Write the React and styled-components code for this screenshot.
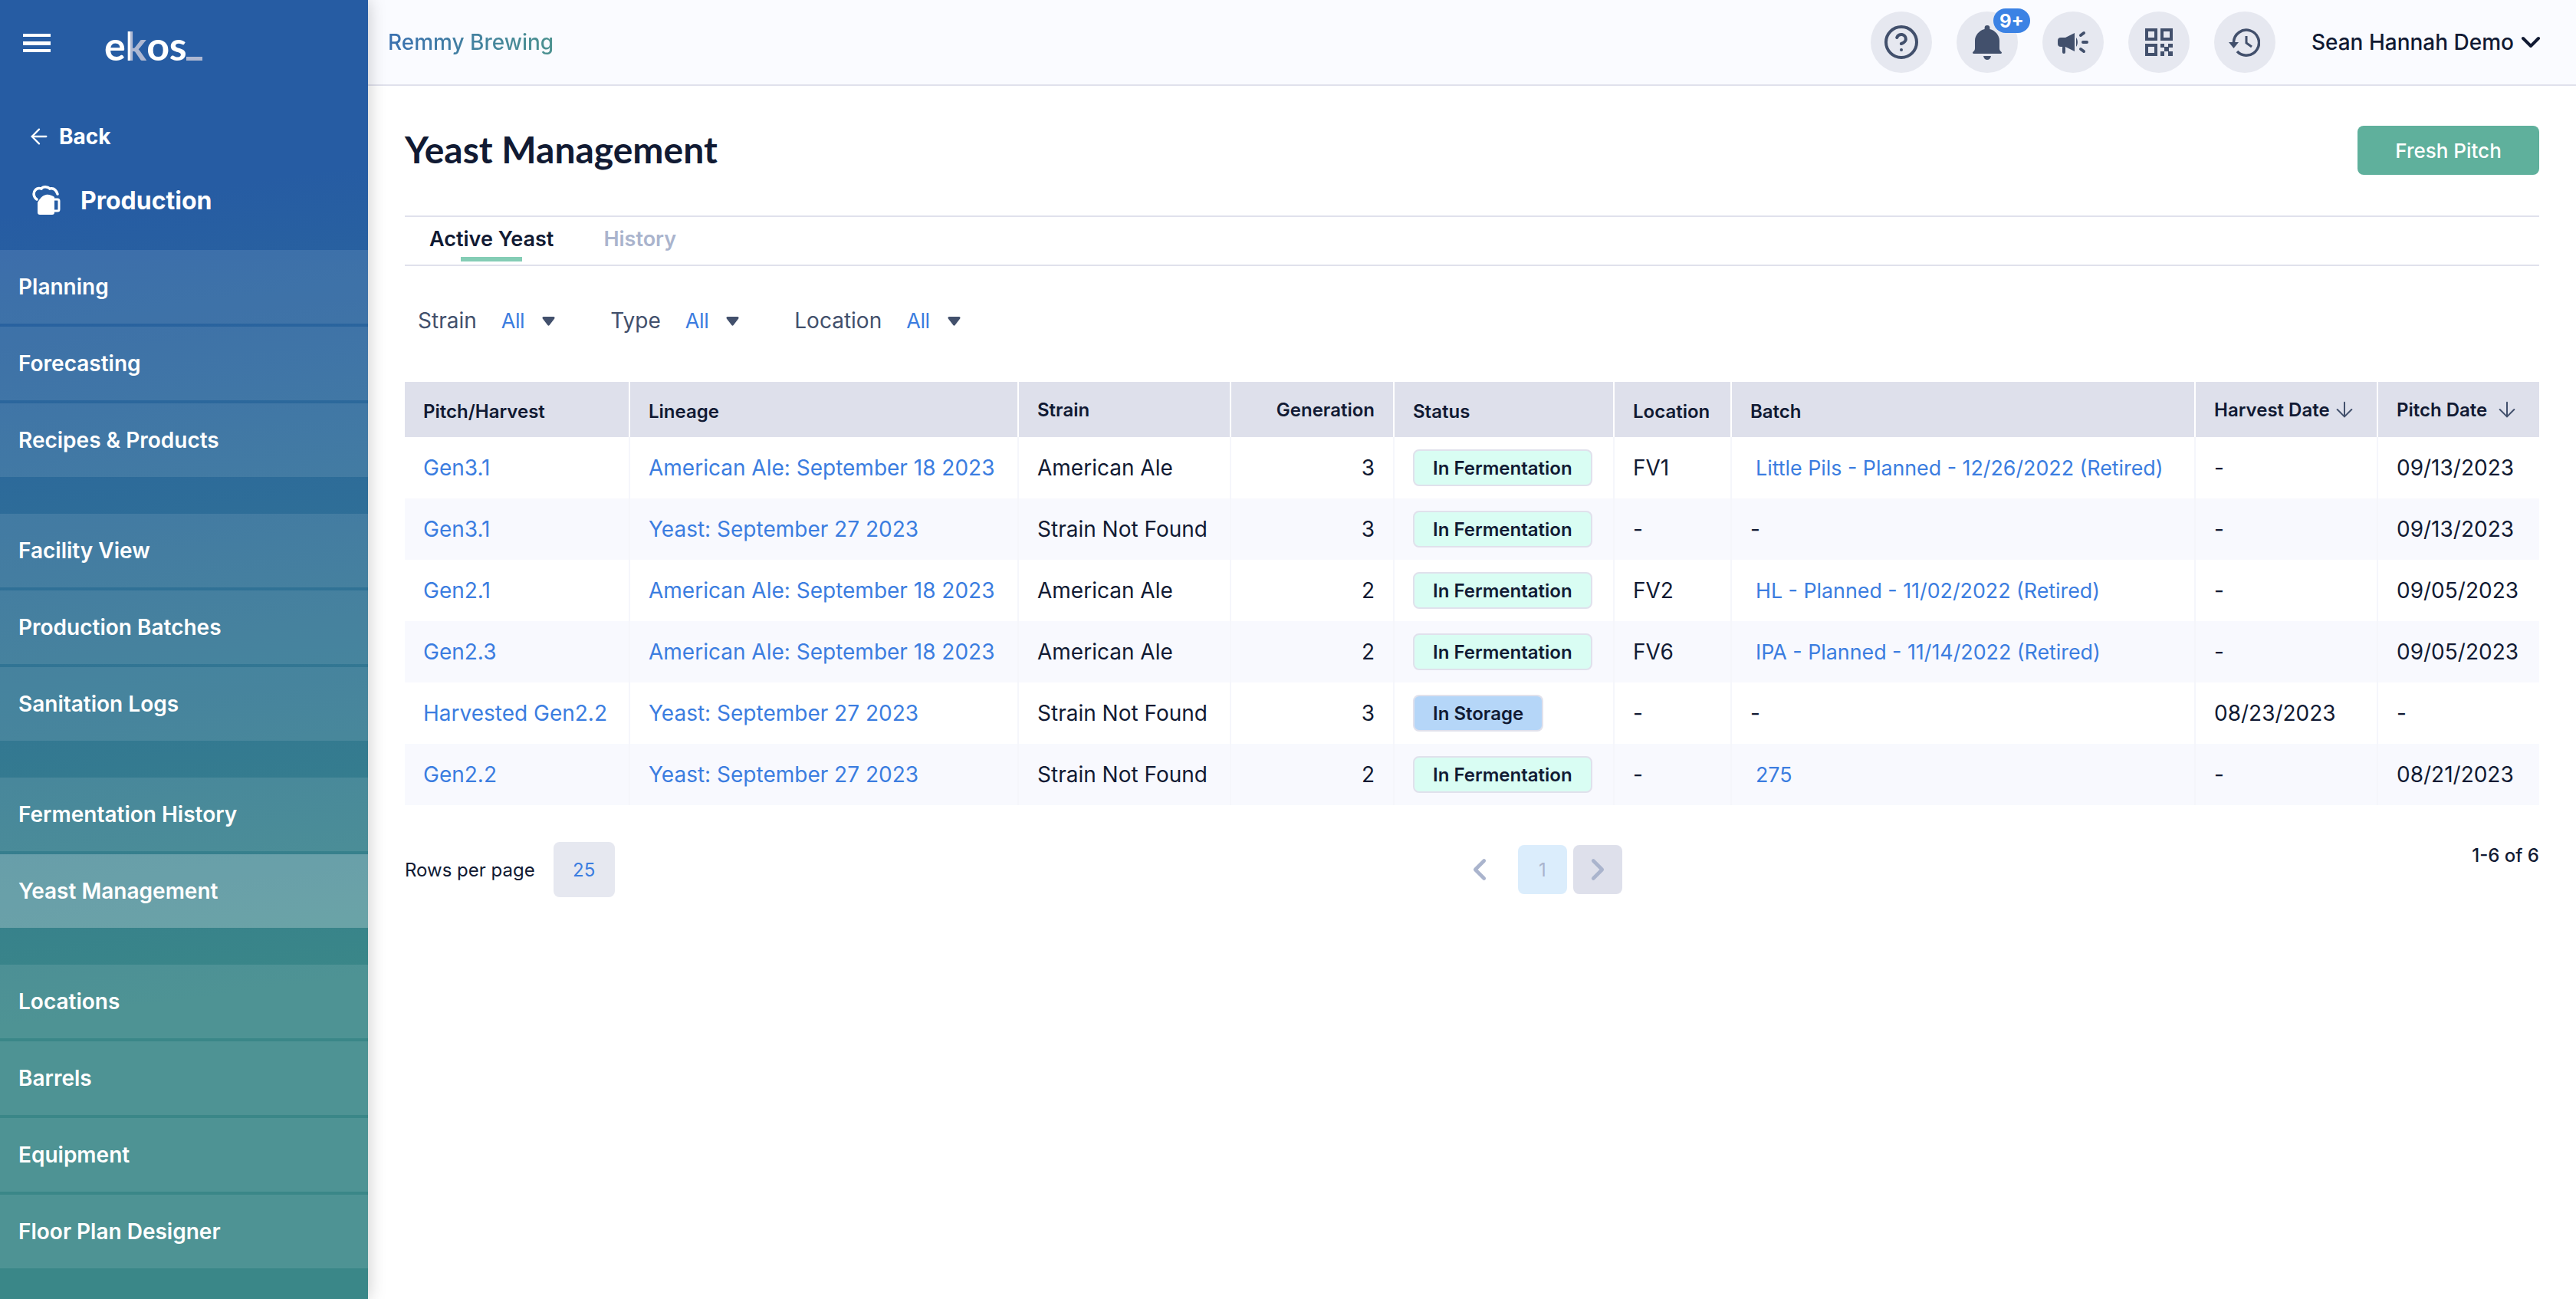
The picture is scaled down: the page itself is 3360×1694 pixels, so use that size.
import React from 'react';
import styled, { createGlobalStyle } from 'styled-components';
import { ArrowDown, ArrowLeft, ChevronDown, ChevronLeft, ChevronRight, CircleHelp } from 'lucide-react';

const Global = createGlobalStyle`
  html, body { margin: 0; padding: 0; height: 100%; overflow: hidden; background: #fff; }
  body { font-family: Inter, "Liberation Sans", sans-serif; color: #111a33; }
  * { box-sizing: border-box; }
`;

const Page = styled.div`display: flex; height: 1694px; width: 3360px;`;

const Sidebar = styled.aside`
  width: 480px; flex: none; position: relative; z-index: 2;
  background: linear-gradient(172deg, #265ca3 16%, #3a8788 76%);
  box-shadow: 0 0 22px rgba(0, 0, 0, 0.22);
  color: #fff;
`;
const Brand = styled.div`display: flex; align-items: flex-start; height: 132px; padding: 44px 0 0 30px;`;
const Burger = styled.div`
  width: 36px; height: 24px; flex: none;
  border-top: 4px solid #fff; border-bottom: 4px solid #fff;
  display: flex; align-items: center;
  &::before { content: ''; display: block; width: 100%; height: 5px; background: #fff; }
`;
const Logo = styled.div`
  margin: -16px 0 0 70px; font-family: Lato, sans-serif; font-weight: 700; font-size: 52px; line-height: 62px;
  letter-spacing: -0.2px; display: flex; align-items: baseline;
`;
const LogoK = styled.span`
  background: linear-gradient(90deg, #fff 24%, #aeb8d2 24%);
  -webkit-background-clip: text; background-clip: text; color: transparent;
`;
const LogoBar = styled.span`width: 21px; height: 5px; background: #aeb8d2; margin: 0 0 -8px -1px;`;
const BackLink = styled.div`
  display: flex; align-items: center; gap: 10px; height: 32px; padding-left: 35px; margin-top: 30px;
  font-size: 28px; font-weight: 700;
`;
const Module = styled.div`
  display: flex; align-items: center; gap: 26px; height: 40px; padding-left: 42px; margin-top: 47px;
  font-size: 32px; font-weight: 700;
`;
const Nav = styled.nav`margin-top: 45px;`;
const NavGroup = styled.div`display: flex; flex-direction: column; gap: 4px; margin-bottom: 48px;`;
const NavItem = styled.div`
  height: 96px; display: flex; align-items: center; padding-left: 24px;
  font-size: 28px; font-weight: 600;
  background: ${p => (p.$active ? 'rgba(255,255,255,0.25)' : 'rgba(255,255,255,0.1)')};
`;

const Main = styled.main`flex: 1; min-width: 0; display: flex; flex-direction: column;`;
const TopBar = styled.header`
  height: 112px; flex: none; background: #fafbff; border-bottom: 2px solid #e0e1ec;
  display: flex; align-items: center; padding: 0 39px 0 26px;
`;
const Company = styled.div`
  font-size: 28px; font-weight: 500;
  background: linear-gradient(90deg, #3a70b0, #4c9290);
  -webkit-background-clip: text; background-clip: text; color: transparent;
`;
const TopActions = styled.div`margin-left: auto; display: flex; align-items: center; gap: 32px;`;
const RoundButton = styled.div`
  width: 80px; height: 80px; border-radius: 50%; background: #e6e8f0; color: #42506c;
  display: flex; align-items: center; justify-content: center; position: relative;
`;
const CountBadge = styled.span`
  position: absolute; top: -4px; right: -16px; width: 48px; height: 32px; border-radius: 16px;
  background: #3b82e4; color: #fff; font-size: 24px; font-weight: 700;
  display: flex; align-items: center; justify-content: center;
`;
const UserMenu = styled.div`
  display: flex; align-items: center; gap: 2px; margin-left: 15px; font-size: 28px; font-weight: 500; color: #111a33;
`;

const Content = styled.div`padding: 52px 48px 0;`;
const TitleRow = styled.div`display: flex; align-items: center; justify-content: space-between; height: 64px;`;
const Title = styled.h1`
  margin: 0 0 3px; font-family: Lato, sans-serif; font-weight: 700; font-size: 48px; color: #111a33;
`;
const FreshButton = styled.button`
  width: 237px; height: 64px; border: 0; border-radius: 8px; background: #5fb09c; color: #fff;
  font: 500 26px Inter, sans-serif; padding: 0;
`;
const Tabs = styled.div`
  margin-top: 53px; height: 66px; border-top: 2px solid #e0e1ec; border-bottom: 2px solid #e0e1ec;
  display: flex; gap: 65px; padding: 0 0 6px 32px; align-items: center;
`;
const Tab = styled.div`
  font-size: 27px; font-weight: 600; color: ${p => (p.$active ? '#111a33' : '#aab4cd')}; position: relative;
  ${p => p.$active && `
    &::after { content: ''; position: absolute; left: 41px; width: 80px; height: 6px; bottom: -13px; background: #84cdb5; }
  `}
`;
const Filters = styled.div`display: flex; align-items: center; height: 142px; margin-bottom: 9px; padding-left: 17px; gap: 72px;`;
const Filter = styled.div`display: flex; align-items: center; font-size: 28px;`;
const FilterLabel = styled.span`color: #42506c; margin-right: 32px;`;
const FilterValue = styled.span`color: #3b7de0; margin-right: 23px; font-size: 27px; letter-spacing: -0.4px;`;

const columns = '292px 507px 277px 213px 287px 153px 605px 238px 1fr';
const TableHead = styled.div`
  display: grid; grid-template-columns: ${columns}; height: 72px; background: #dee0eb;
`;
const HeadCell = styled.div`
  display: flex; align-items: center; gap: ${p => p.$gap || 0}px; justify-content: ${p => (p.$right ? 'flex-end' : 'flex-start')};
  padding: ${p => (p.$raised ? 0 : 4)}px 24px 0;
  border-left: ${p => (p.$first ? 0 : '2px solid #fff')};
  font-size: 24px; font-weight: 600; color: #111a33;
`;
const TableRow = styled.div`
  display: grid; grid-template-columns: ${columns}; height: 80px;
  background: ${p => (p.$alt ? '#f8f9fe' : '#fff')};
`;
const Cell = styled.div`
  display: flex; align-items: center; justify-content: ${p => (p.$right ? 'flex-end' : 'flex-start')};
  padding: 0 24px; font-size: 28px; color: #111a33; white-space: nowrap;
  border-left: ${p => (p.$first ? 0 : '2px solid #f5f6fb')};
`;
const TableLink = styled.span`
  color: #3b7de0;
  ${p => p.$inset && 'padding-left: 7px; font-size: 26.8px;'}
`;
const StatusBadge = styled.span`
  height: 48px; padding: 0 24px; border-radius: 8px; border: 2px solid #e0e1ec;
  background: ${p => (p.$storage ? '#b5d6f8' : '#d9fdf3')};
  font-size: 24px; font-weight: 600; display: flex; align-items: center; color: #111a33;
`;
const Footer = styled.div`display: grid; grid-template-columns: 1379px auto 1fr; margin-top: 48px; align-items: start;`;
const RowsPer = styled.div`display: flex; align-items: center; gap: 24px; font-size: 24px; height: 72px;`;
const RowsValue = styled.div`
  width: 80px; height: 72px; border-radius: 8px; background: #e6e8f0; color: #3b7de0;
  display: flex; align-items: center; justify-content: center;
`;
const Pager = styled.div`display: flex; align-items: center; gap: 8px; margin-top: 4px;`;
const PrevBtn = styled.div`width: 65px; display: flex; color: #aab4cd;`;
const PageBtn = styled.div`
  width: 64px; height: 64px; border-radius: 8px; display: flex; align-items: center; justify-content: center;
  background: ${p => (p.$current ? '#dbedfc' : '#dee0eb')}; color: #aab4cd; font-size: 24px;
`;
const Count = styled.div`text-align: right; font-size: 24px; font-weight: 500; margin-top: 3px;`;

const Beer = () => (
  <svg width="37" height="38" viewBox="0 0 37 38" fill="none">
    <path d="M7 22C10 17 13 13 18 12C22 11 26 13 29 15V35a3 3 0 0 1-3 3H10a3 3 0 0 1-3-3Z" fill="#fff" />
    <path d="M29 18h4a2 2 0 0 1 2 2v11a2 2 0 0 1-2 2h-4" stroke="#fff" strokeWidth="3" />
    <path d="M6 18C1.500 15 1 9 4 6C6 3.500 9 3 12 4C14 1 20 1 23 4C27 3 31 5 33 11" stroke="#fff" strokeWidth="3.500" strokeLinecap="round" />
  </svg>
);
const Bell = () => (
  <svg width="38" height="45" viewBox="0 0 38 45" fill="currentColor">
    <path d="M19 0a3.400 3.400 0 0 1 3.400 3.400v1.600C29.500 6.800 35 13 35 20v10c0 2 1 3.500 2.500 4.800.9.800.5 2.200-.8 2.200H1.300C0 37-.4 35.600.5 34.800 2 33.500 3 32 3 30V20C3 13 8.500 6.800 15.600 5V3.400A3.400 3.400 0 0 1 19 0Z" />
    <path d="M14 40h10c-.5 3-2.500 5-5 5s-4.500-2-5-5Z" />
  </svg>
);
const Megaphone = () => (
  <svg width="40" height="30" viewBox="0 0 40 30" fill="currentColor">
    <path d="M4 9h6l12-6v24l-12-6H4a4 4 0 0 1-4-4v-4a4 4 0 0 1 4-4Z" />
    <rect x="6" y="20" width="4" height="10" rx="2" />
    <path d="M24 9c2.500 3 2.500 9 0 12Z" />
    <path d="M30 6l4-3M33 15h5M30 24l4 3" stroke="currentColor" strokeWidth="4" strokeLinecap="round" fill="none" />
  </svg>
);
const Qr = () => (
  <svg width="36" height="36" viewBox="0 0 36 36" fill="none">
    <g stroke="currentColor" strokeWidth="4">
      <rect x="2" y="2" width="12" height="12" />
      <rect x="22" y="2" width="12" height="12" />
      <rect x="2" y="22" width="12" height="12" />
    </g>
    <g fill="currentColor">
      <rect x="20" y="20" width="5" height="5" /><rect x="30" y="20" width="6" height="5" />
      <rect x="25" y="24" width="6" height="6" />
      <rect x="20" y="30" width="5" height="6" /><rect x="30" y="30" width="6" height="6" />
    </g>
  </svg>
);
const HistoryIcon = () => (
  <svg width="41" height="37" viewBox="0 0 41 37" fill="none">
    <path d="M6.500 18A16.500 16.500 0 1 1 11 30" stroke="currentColor" strokeWidth="3.500" />
    <path d="M0 18h13l-6.500 8Z" fill="currentColor" />
    <path d="M23 10v9l7 5" stroke="currentColor" strokeWidth="3" />
  </svg>
);
const Caret = () => (
  <svg width="17" height="13" viewBox="0 0 17 13" fill="#42506c">
    <path d="M2 1h13a1.500 1.500 0 0 1 1.200 2.400L9.700 12a1.500 1.500 0 0 1-2.400 0L.8 3.400A1.500 1.500 0 0 1 2 1Z" />
  </svg>
);

const nav = [
  ['Planning', 'Forecasting', 'Recipes & Products'],
  ['Facility View', 'Production Batches', 'Sanitation Logs'],
  ['Fermentation History', 'Yeast Management'],
  ['Locations', 'Barrels', 'Equipment', 'Floor Plan Designer'],
];
const FERM = 'In Fermentation';
const rows = [
  ['Gen3.1', 'American Ale: September 18 2023', 'American Ale', 3, FERM, 'FV1', 'Little Pils - Planned - 12/26/2022 (Retired)', '-', '09/13/2023'],
  ['Gen3.1', 'Yeast: September 27 2023', 'Strain Not Found', 3, FERM, '-', '-', '-', '09/13/2023'],
  ['Gen2.1', 'American Ale: September 18 2023', 'American Ale', 2, FERM, 'FV2', 'HL - Planned - 11/02/2022 (Retired)', '-', '09/05/2023'],
  ['Gen2.3', 'American Ale: September 18 2023', 'American Ale', 2, FERM, 'FV6', 'IPA - Planned - 11/14/2022 (Retired)', '-', '09/05/2023'],
  ['Harvested Gen2.2', 'Yeast: September 27 2023', 'Strain Not Found', 3, 'In Storage', '-', '-', '08/23/2023', '-'],
  ['Gen2.2', 'Yeast: September 27 2023', 'Strain Not Found', 2, FERM, '-', '275', '-', '08/21/2023'],
];
const filters = ['Strain', 'Type', 'Location'];

export default function App() {
  return (
    <Page>
      <Global />
      <Sidebar>
        <Brand>
          <Burger />
          <Logo>e<LogoK>k</LogoK>os<LogoBar /></Logo>
        </Brand>
        <BackLink><ArrowLeft size={32} strokeWidth={1.7} />Back</BackLink>
        <Module><Beer />Production</Module>
        <Nav>
          {nav.map((group, i) => (
            <NavGroup key={i}>
              {group.map(name => <NavItem key={name} $active={name === 'Yeast Management'}>{name}</NavItem>)}
            </NavGroup>
          ))}
        </Nav>
      </Sidebar>
      <Main>
        <TopBar>
          <Company>Remmy Brewing</Company>
          <TopActions>
            <RoundButton><CircleHelp size={48} strokeWidth={2} /></RoundButton>
            <RoundButton><Bell /><CountBadge>9+</CountBadge></RoundButton>
            <RoundButton><Megaphone /></RoundButton>
            <RoundButton><Qr /></RoundButton>
            <RoundButton><HistoryIcon /></RoundButton>
            <UserMenu>Sean Hannah Demo<ChevronDown size={40} strokeWidth={2.4} /></UserMenu>
          </TopActions>
        </TopBar>
        <Content>
          <TitleRow>
            <Title>Yeast Management</Title>
            <FreshButton>Fresh Pitch</FreshButton>
          </TitleRow>
          <Tabs>
            <Tab $active>Active Yeast</Tab>
            <Tab>History</Tab>
          </Tabs>
          <Filters>
            {filters.map(f => (
              <Filter key={f}>
                <FilterLabel>{f}</FilterLabel>
                <FilterValue>All</FilterValue>
                <Caret />
              </Filter>
            ))}
          </Filters>
          <TableHead>
            <HeadCell $first>Pitch/Harvest</HeadCell>
            <HeadCell>Lineage</HeadCell>
            <HeadCell $raised>Strain</HeadCell>
            <HeadCell $raised $right>Generation</HeadCell>
            <HeadCell>Status</HeadCell>
            <HeadCell>Location</HeadCell>
            <HeadCell>Batch</HeadCell>
            <HeadCell $raised $gap={3}>Harvest Date<ArrowDown size={32} color="#42506c" strokeWidth={1.5} /></HeadCell>
            <HeadCell $raised $gap={10}>Pitch Date<ArrowDown size={32} color="#42506c" strokeWidth={1.5} /></HeadCell>
          </TableHead>
          {rows.map((r, i) => (
            <TableRow key={i} $alt={i % 2 === 1}>
              <Cell $first><TableLink>{r[0]}</TableLink></Cell>
              <Cell><TableLink>{r[1]}</TableLink></Cell>
              <Cell>{r[2]}</Cell>
              <Cell $right>{r[3]}</Cell>
              <Cell><StatusBadge $storage={r[4] === 'In Storage'}>{r[4]}</StatusBadge></Cell>
              <Cell>{r[5]}</Cell>
              <Cell>{r[6] === '-' ? r[6] : <TableLink $inset>{r[6]}</TableLink>}</Cell>
              <Cell>{r[7]}</Cell>
              <Cell>{r[8]}</Cell>
            </TableRow>
          ))}
          <Footer>
            <RowsPer>Rows per page<RowsValue>25</RowsValue></RowsPer>
            <Pager>
              <PrevBtn><ChevronLeft size={46} strokeWidth={2.4} /></PrevBtn>
              <PageBtn $current>1</PageBtn>
              <PageBtn><ChevronRight size={46} strokeWidth={2.4} /></PageBtn>
            </Pager>
            <Count>1-6 of 6</Count>
          </Footer>
        </Content>
      </Main>
    </Page>
  );
}
